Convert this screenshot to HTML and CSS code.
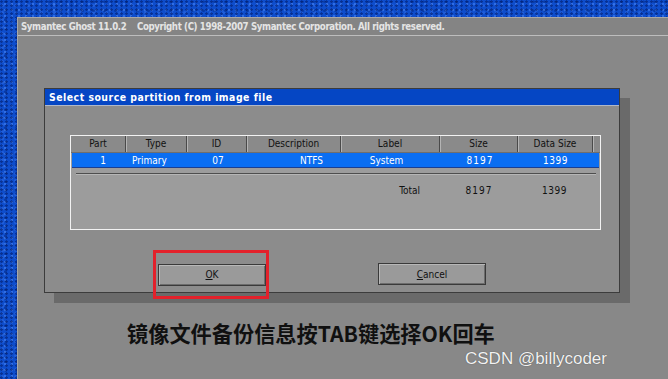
FILE: index.html
```html
<!DOCTYPE html>
<html lang="en">
<head>
    <meta charset="UTF-8">
    <meta name="viewport" content="width=device-width, initial-scale=1.0">
    <title>Symantec Ghost - Select source partition</title>
    <link rel="stylesheet" href="styles.css">
</head>
<body>
    <div class="desktop">
        <div class="ghost">
            <div class="ghost-title">Symantec Ghost 11.0.2&nbsp;&nbsp;&nbsp; Copyright (C) 1998-2007 Symantec Corporation. All rights reserved.</div>

            <div class="ghost-body">
                <!-- Partition dialog -->
                <div class="dialog">
                    <div class="dialog-title">Select source partition from image file</div>
                    <div class="dialog-body">
                        <div class="part-table">
                            <div class="row head">
                                <span>Part</span>
                                <span>Type</span>
                                <span>ID</span>
                                <span>Description</span>
                                <span>Label</span>
                                <span>Size</span>
                                <span>Data Size</span>
                            </div>
                            <div class="row selected">
                                <span class="c-part">1</span>
                                <span class="c-type">Primary</span>
                                <span class="c-id">07</span>
                                <span class="c-desc">NTFS</span>
                                <span class="c-label">System</span>
                                <span class="c-size">8197</span>
                                <span class="c-data">1399</span>
                            </div>
                            <div class="rule"></div>
                            <div class="row total">
                                <span></span>
                                <span></span>
                                <span></span>
                                <span></span>
                                <span class="c-total">Total</span>
                                <span class="c-size">8197</span>
                                <span class="c-data">1399</span>
                            </div>
                        </div>

                        <div class="buttons">
                            <div class="btn-slot">
                                <button class="btn"><u>O</u>K</button>
                                <div class="highlight"></div>
                            </div>
                            <button class="btn"><u>C</u>ancel</button>
                        </div>
                    </div>
                </div>

                <p class="caption">镜像文件备份信息按TAB键选择OK回车</p>
                <p class="watermark">CSDN @billycoder</p>
            </div>
        </div>
    </div>
</body>
</html>
```

FILE: styles.css
```css
/* Page */
body {
    margin: 0;
    font-family: 'DejaVu Sans Condensed', 'DejaVu Sans', sans-serif;
}

.desktop {
    width: 668px;
    height: 379px;
    box-sizing: border-box;
    padding: 17px 0 0 17px;
    overflow: hidden;
    background-color: #0e4dcc;
    background-image:
        radial-gradient(circle at 30% 40%, rgba(0, 20, 90, 0.5) 0 1px, transparent 1.5px),
        radial-gradient(circle at 70% 70%, rgba(90, 150, 255, 0.45) 0 1px, transparent 1.5px),
        radial-gradient(circle at 50% 20%, rgba(0, 30, 110, 0.4) 0 1px, transparent 1.6px),
        radial-gradient(circle at 20% 80%, rgba(60, 120, 240, 0.4) 0 1px, transparent 1.8px);
    background-size: 5px 4px, 7px 6px, 11px 9px, 13px 7px;
}

/* Outer Ghost window */
.ghost {
    height: 100%;
    background: #888888;
    border-top: 1px solid #a8a8a8;
    border-left: 1px solid #a8a8a8;
    display: flex;
    flex-direction: column;
}

.ghost-title {
    height: 17px;
    line-height: 17px;
    padding-left: 3px;
    background: #848484;
    border-bottom: 1px solid #bdbdbd;
    color: #e4e4e4;
    font-size: 9.6px;
    font-weight: bold;
    letter-spacing: -0.36px;
    white-space: nowrap;
}

.ghost-body {
    flex: 1;
    padding: 52px 0 0 26px;
}

/* Dialog */
.dialog {
    width: 576px;
    height: 205px;
    box-sizing: border-box;
    border: 1px solid #3c3c3c;
    background: #8c8c8c;
    box-shadow: 10px 10px 0 #6a6a6a;
    display: flex;
    flex-direction: column;
}

.dialog-title {
    height: 16px;
    line-height: 16px;
    padding-left: 4px;
    background: #0546c4;
    border-bottom: 1px solid #b0b8c8;
    color: #ffffff;
    font-size: 10.4px;
    font-weight: bold;
    letter-spacing: 0.5px;
}

.dialog-body {
    flex: 1;
    padding: 29px 0 0 25px;
}

/* Partition table */
.part-table {
    width: 531px;
    height: 95px;
    box-sizing: border-box;
    border: 1px solid #f2f2f2;
    background: #9c9c9c;
    font-size: 10px;
    color: #111111;
}

.row {
    display: grid;
    grid-template-columns: 55px 61px 60px 94px 99px 78px 75px;
    align-items: center;
}

.row.head {
    height: 16px;
    background: #8a8a8a;
    border-bottom: 1px solid #6e6e6e;
}

.row.head span {
    text-align: center;
    height: 16px;
    line-height: 16px;
    border-right: 1px solid #4a4a4a;
    box-shadow: 1px 0 0 #b4b4b4;
}

.row.selected {
    height: 14px;
    margin: 0 1px;
    background: #0a6ef2;
    border-bottom: 1px solid #1b3f90;
    color: #ffffff;
}

.rule {
    height: 1px;
    margin: 5px 4px 0 5px;
    background: #4e4e4e;
    border-bottom: 1px solid #b6b6b6;
}

.row.total {
    height: 18px;
    margin-top: 6px;
}

.c-part { text-align: right; padding-right: 21px; }
.c-type { padding-left: 5px; }
.c-id { text-align: center; }
.c-desc { text-align: right; padding-right: 19px; }
.c-label { text-align: center; padding-right: 10px; }
.c-total { text-align: right; padding-right: 20px; }
.c-size { text-align: center; letter-spacing: 1px; }
.c-data { text-align: center; letter-spacing: 0.5px; padding-right: 2px; }

/* Buttons */
.buttons {
    display: flex;
    gap: 112px;
    margin-top: 33px;
    padding-left: 88px;
}

.btn-slot {
    position: relative;
}

.btn {
    width: 108px;
    height: 22px;
    padding: 0;
    background: #9a9a9a;
    border: 1px solid #3a3a3a;
    box-shadow: inset 1px 1px 0 #b8b8b8, inset -1px -1px 0 #6c6c6c;
    font-family: inherit;
    font-size: 10px;
    color: #111111;
}

.highlight {
    position: absolute;
    left: -5px;
    top: -13px;
    width: 116px;
    height: 49px;
    box-sizing: border-box;
    border: 3px solid #e3212b;
}

/* Annotation text */
.caption {
    margin: 28px 0 0 83px;
    font-family: 'Noto Sans CJK SC', sans-serif;
    font-size: 21.2px;
    font-weight: bold;
    color: #101010;
    line-height: 24px;
}

.watermark {
    margin: 4px 0 0 421px;
    font-family: 'Liberation Sans', Arial, sans-serif;
    font-size: 17px;
    color: #f2f2f2;
    text-shadow: 0 0 1px #444444;
    line-height: 20px;
}
```
